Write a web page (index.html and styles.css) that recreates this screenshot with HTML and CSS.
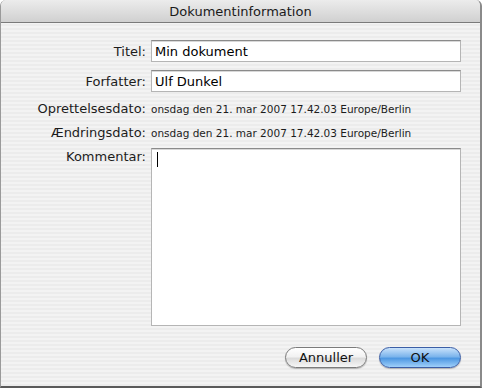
FILE: index.html
```html
<!DOCTYPE html>
<html lang="da">
<head>
    <meta charset="UTF-8">
    <title>Dokumentinformation</title>
    <link rel="stylesheet" href="styles.css">
</head>
<body>
    <div class="window">
        <div class="titlebar">Dokumentinformation</div>
        <div class="content">
            <form class="info-form">
                <label class="label" for="title">Titel:</label>
                <input class="field" type="text" id="title" value="Min dokument">

                <label class="label" for="author">Forfatter:</label>
                <input class="field" type="text" id="author" value="Ulf Dunkel">

                <span class="label">Oprettelsesdato:</span>
                <span class="date">onsdag den 21. mar 2007 17.42.03 Europe/Berlin</span>

                <span class="label">Ændringsdato:</span>
                <span class="date">onsdag den 21. mar 2007 17.42.03 Europe/Berlin</span>

                <label class="label label-top" for="comment">Kommentar:</label>
                <div class="comment" id="comment"><span class="caret"></span></div>
            </form>

            <div class="buttons">
                <button type="button" class="btn">Annuller</button>
                <button type="button" class="btn btn-default">OK</button>
            </div>
        </div>
    </div>
</body>
</html>
```

FILE: styles.css
```css
body {
    margin: 0;
    background: #fff;
    font-family: "DejaVu Sans", "Liberation Sans", sans-serif;
}

.window {
    width: 482px;
    height: 388px;
    box-sizing: border-box;
    border-left: 1px solid #9a9a9a;
    border-right: 2px solid #8a8a8a;
    border-bottom: 2px solid #5a5a5a;
    border-radius: 6px 6px 0 0;
    overflow: hidden;
    background: repeating-linear-gradient(to bottom, #ececec 0, #ececec 2px, #f3f3f3 2px, #f3f3f3 4px);
}

.titlebar {
    height: 22px;
    line-height: 23px;
    text-align: center;
    font-size: 13px;
    color: #1a1a1a;
    background: linear-gradient(to bottom, #ececec, #d0d0d0);
    border-bottom: 1px solid #7a7a7a;
}

.content {
    padding: 17px 0 0 0;
}

.info-form {
    display: grid;
    grid-template-columns: 145px 310px;
    grid-template-rows: 22px 22px 17px 15px 178px;
    column-gap: 5px;
    row-gap: 8px;
    align-items: center;
}

.label {
    text-align: right;
    font-size: 13px;
    color: #1c1c1c;
}

.label-top {
    align-self: start;
    padding-top: 1px;
}

.field {
    box-sizing: border-box;
    height: 22px;
    margin: 0;
    padding: 0 3px;
    font-family: inherit;
    font-size: 13px;
    color: #000;
    background: #fff;
    border: 1px solid #b5b5b5;
    border-top-color: #8a8a8a;
    box-shadow: inset 0 1px 0 #d8d8d8;
    outline: none;
}

.date {
    font-size: 10.5px;
    color: #1c1c1c;
    white-space: nowrap;
}

.comment {
    box-sizing: border-box;
    height: 178px;
    background: #fff;
    border: 1px solid #b5b5b5;
    border-top-color: #8a8a8a;
    box-shadow: inset 0 1px 0 #d8d8d8;
    padding: 3px 5px;
}

.caret {
    display: block;
    width: 1px;
    height: 15px;
    background: #000;
}

.buttons {
    display: flex;
    justify-content: flex-end;
    gap: 12px;
    padding: 21px 19px 0 0;
}

.btn {
    width: 82px;
    height: 21px;
    padding: 0;
    font-family: inherit;
    font-size: 13px;
    color: #111;
    border: 1px solid #7b7b7b;
    border-radius: 11px;
    background: linear-gradient(to bottom, #ffffff 0%, #f2f2f2 45%, #dcdcdc 55%, #f6f6f6 100%);
    box-shadow: 0 1px 1px rgba(0, 0, 0, 0.25);
}

.btn-default {
    border-color: #3b5ea6;
    background: linear-gradient(to bottom, #c9e2fb 0%, #7db5ec 45%, #4f98e2 55%, #9fd0fa 100%);
}
```
